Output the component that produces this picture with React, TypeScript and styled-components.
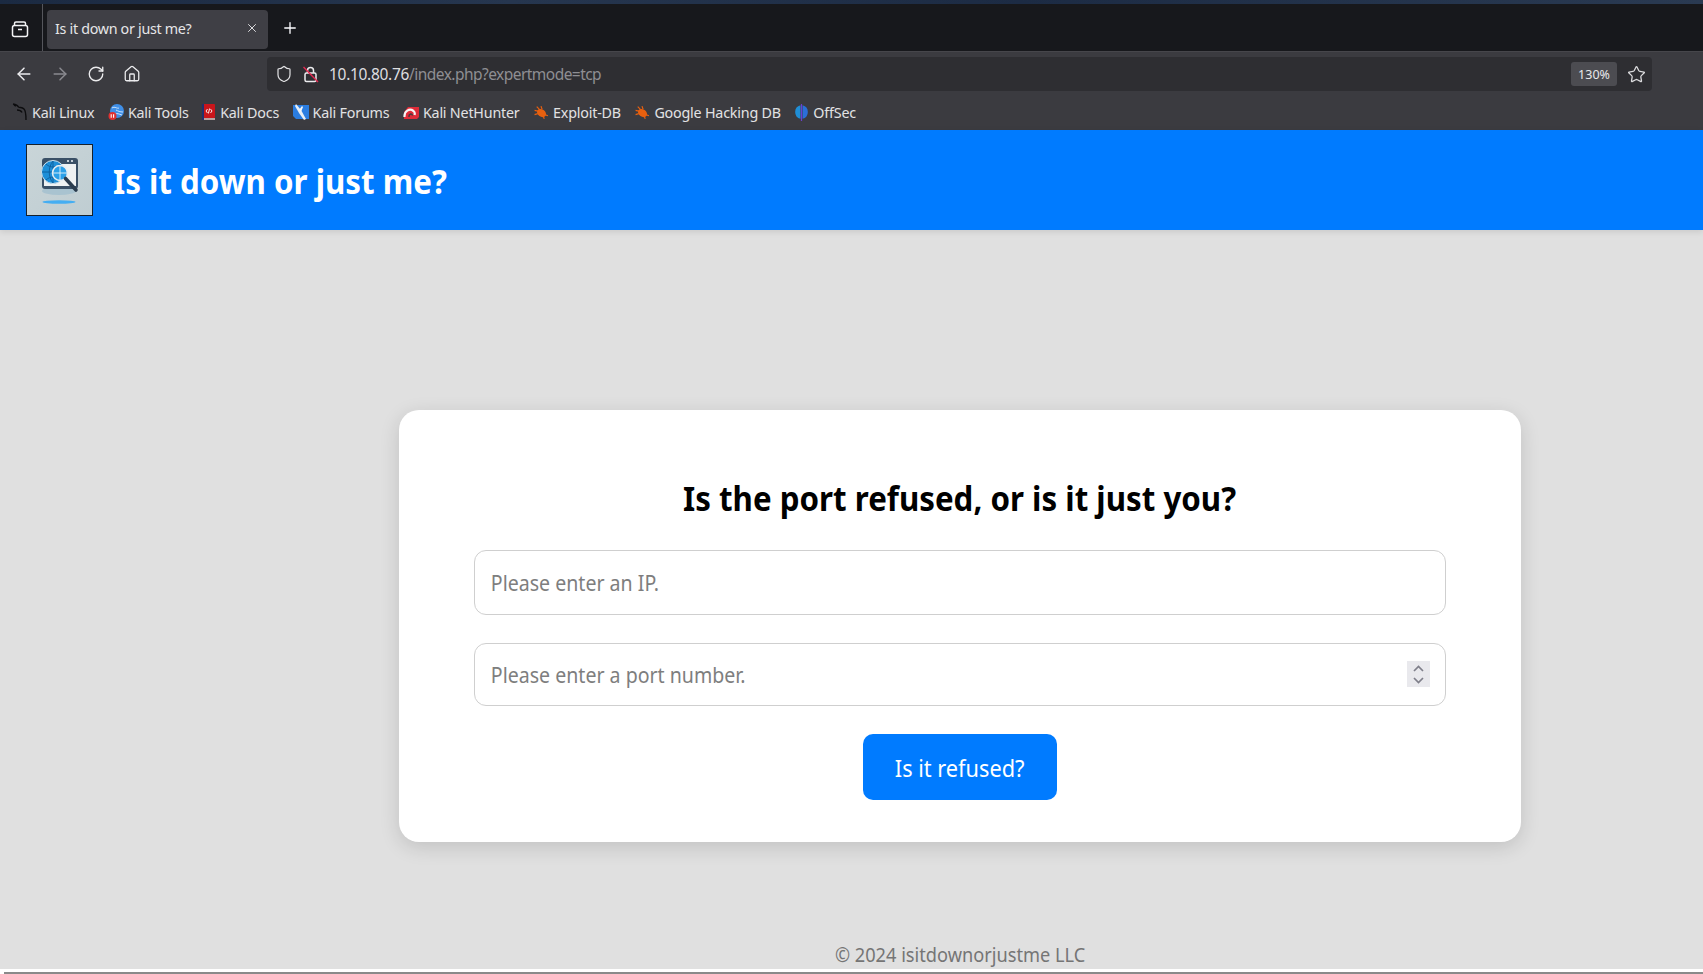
import React from "react";
import styled, { createGlobalStyle } from "styled-components";
import { ArrowLeft, ArrowRight, RotateCw, Home, Shield, Star, Plus, X } from "lucide-react";

const Global = createGlobalStyle`
  html, body { margin: 0; padding: 0; height: 974px; overflow: hidden; background: #e0e0e0; }
  * { box-sizing: border-box; }
  body { font-family: "Noto Sans", "Open Sans", sans-serif; }
`;

const Page = styled.div`
  display: flex;
  flex-direction: column;
  height: 974px;
`;
const Wallpaper = styled.div`
  height: 4px;
  background: linear-gradient(90deg, #1b2a42, #26364f 30%, #1c2b44 60%, #2a3a52);
`;
const TabBar = styled.div`
  height: 47px;
  background: #17181c;
  display: flex;
  align-items: center;
  color: #fbfbfe;
`;
const TabListButton = styled.div`
  width: 43px;
  height: 47px;
  display: flex;
  align-items: center;
  justify-content: center;
  border-right: 1px solid #55565c;
  padding-right: 3px;
  padding-top: 2px;
`;
const Tab = styled.div`
  margin-left: 4px;
  margin-top: 3px;
  width: 221px;
  height: 39px;
  background: #3f3f45;
  border-radius: 4px;
  display: flex;
  align-items: center;
  justify-content: space-between;
  padding: 0 9px 2px 8px;
  font-size: 14.3px;
  letter-spacing: -0.3px;
  color: #e6e6e8;
`;
const NewTab = styled.div`
  margin-left: 13px;
  margin-top: 1px;
  display: flex;
`;
const Toolbar = styled.div`
  height: 40px;
  background: #3b3b40;
  border-top: 1px solid #46464b;
  display: flex;
  align-items: flex-start;
  color: #e4e4e6;
`;
const NavGroup = styled.div`
  width: 267px;
  height: 44px;
  display: flex;
  align-items: center;
  gap: 14px;
  padding-left: 13px;
`;
const NavIcon = styled.div<{ $dim?: boolean }>`
  width: 22px;
  display: flex;
  justify-content: center;
  color: ${(p) => (p.$dim ? "#8b8b90" : "#ececee")};
`;
const UrlBar = styled.div`
  margin-top: 5px;
  width: 1385px;
  height: 34px;
  background: #2e2e32;
  border-radius: 4px;
  display: flex;
  align-items: center;
  padding: 0 0 0 3px;
  font-size: 15.5px;
`;
const UrlIcon = styled.div`
  width: 27px;
  display: flex;
  justify-content: center;
`;
const UrlText = styled.div`
  margin-left: 5px;
  flex: 1;
  color: #8e8e92;
  white-space: nowrap;
  letter-spacing: -0.54px;
`;
const UrlHost = styled.span`
  color: #dedee0;
  letter-spacing: -0.3px;
`;
const ZoomBadge = styled.div`
  width: 46px;
  height: 24px;
  border-radius: 3px;
  background: #4c4c51;
  color: #e8e8ea;
  font-size: 12.5px;
  display: flex;
  align-items: center;
  justify-content: center;
`;
const StarSlot = styled.div`
  width: 35px;
  display: flex;
  justify-content: flex-end;
  padding-right: 6px;
  color: #dcdcde;
`;
const Bookmarks = styled.div`
  height: 39px;
  background: #3b3b40;
  display: flex;
  align-items: center;
  padding: 3px 0 0 12px;
  gap: 13.5px;
  color: #e2e2e4;
  font-size: 14.3px;
  letter-spacing: -0.2px;
`;
const Bookmark = styled.div`
  display: flex;
  align-items: center;
  gap: 4px;
  white-space: nowrap;
`;
const SiteHeader = styled.header`
  height: 100px;
  background: #007bff;
  display: flex;
  align-items: center;
  padding-left: 26px;
  gap: 20px;
  box-shadow: 0 2px 6px rgba(0, 0, 0, 0.1);
  position: relative;
`;
const Logo = styled.svg`
  width: 67px;
  height: 72px;
  display: block;
`;
const SiteTitle = styled.h1`
  margin: 0;
  color: #fff;
  font-size: 34px;
  font-weight: 700;
  line-height: 1;
  padding-top: 2px;
  transform: scaleX(0.92);
  transform-origin: left center;
`;
const Main = styled.main`
  flex: 1;
  display: flex;
  flex-direction: column;
  align-items: center;
  padding: 180px 0 0 217px;
`;
const Card = styled.section`
  width: 1122px;
  height: 432px;
  background: #fff;
  border-radius: 20px;
  box-shadow: 0 5px 20px rgba(0, 0, 0, 0.14);
  padding: 66px 75px 0;
  display: flex;
  flex-direction: column;
  align-items: center;
`;
const Heading = styled.h2`
  margin: 0 0 27px;
  height: 47px;
  line-height: 45px;
  font-size: 34px;
  font-weight: 700;
  color: #000;
  transform: scaleX(0.92);
`;
const Field = styled.label<{ $h: number }>`
  width: 100%;
  height: ${(p) => p.$h}px;
  border: 1.5px solid #cfcfcf;
  border-radius: 12px;
  margin-bottom: 28px;
  display: flex;
  align-items: center;
  padding: 0 15px 0 14px;
`;
const Input = styled.input`
  flex: 1;
  border: 0;
  outline: 0;
  background: transparent;
  font: 400 21.5px "Noto Sans", sans-serif;
  color: #333;
  transform: scaleX(0.91);
  transform-origin: left center;
  &::placeholder { color: #7e7e7e; opacity: 1; }
`;
const Spinner = styled.span`
  width: 23px;
  height: 26px;
  margin-bottom: 1px;
  background: #e9e9ed;
  display: flex;
  align-items: center;
  justify-content: center;
`;
const Submit = styled.button`
  width: 194px;
  height: 66px;
  border: 0;
  border-radius: 10px;
  padding: 2px 0 0;
  background: #007bff;
  color: #fff;
  font: 400 23px "Noto Sans", sans-serif;
`;
const SubmitLabel = styled.span`
  display: inline-block;
  transform: scaleX(0.945);
`;
const Footer = styled.footer`
  margin-top: auto;
  height: 30px;
  line-height: 32px;
  font-size: 19.8px;
  color: #757575;
  transform: scaleX(0.92);
`;
const BottomEdge = styled.div`
  height: 5px;
  background: #fff;
  padding: 3px 0 0 4px;
`;
const EdgeLine = styled.div`
  height: 2px;
  background: #8a8a8a;
`;

const TabListIcon = () => (
  <svg width="18" height="18" viewBox="0 0 18 18" fill="none" stroke="#f4f4f6" strokeWidth="1.5">
    <rect x="1.5" y="5.5" width="15" height="11" rx="2" />
    <path d="M3.5 5.5V3.5a1.5 1.5 0 0 1 1.5-1.5h8a1.5 1.5 0 0 1 1.5 1.5v2" />
    <path d="M7 9.5h4" />
  </svg>
);
const LockOffIcon = () => (
  <svg width="18" height="18" viewBox="0 0 18 18" fill="none" strokeWidth="1.5">
    <rect x="3" y="8" width="11" height="8.5" rx="1.5" stroke="#ececee" />
    <path d="M5.5 8V5.5a3 3 0 0 1 6 0V8" stroke="#ececee" />
    <path d="M1.5 2L16 17" stroke="#e22850" strokeWidth="1.4" />
  </svg>
);
const SpinIcon = () => (
  <svg width="13" height="21" viewBox="0 0 13 21" fill="none" stroke="#7f7f8a" strokeWidth="1.7">
    <path d="M2 7l4.5-4.5L11 7" />
    <path d="M2 14l4.5 4.5L11 14" />
  </svg>
);

const KaliIcon = () => (
  <svg width="16" height="18" viewBox="0 0 16 18" fill="none" stroke="#0d0d0f" strokeWidth="1.4">
    <path d="M1 1c3 .5 5 2 5.5 3C8 5 10 4 12 6c1.5 1.5 2 5 2 11" />
    <path d="M5 7c2 0 4 .5 5 2.5" />
    <path d="M2 2l2 1" />
  </svg>
);
const ToolsIcon = () => (
  <svg width="16" height="18" viewBox="0 0 16 18">
    <circle cx="9" cy="8" r="7" fill="#3f8fe8" />
    <path d="M4 5c3-2 5 1 7 0M8 7c2 1 4 2 7 2M7 11c2-1 4 0 7 1" stroke="#cfe4fa" strokeWidth="1" fill="none" />
    <circle cx="4.5" cy="13" r="4" fill="#e03030" />
    <path d="M3.2 11.2v3.6M5.6 11.2v3.6" stroke="#fff" strokeWidth="1.1" />
  </svg>
);
const DocsIcon = () => (
  <svg width="14" height="18" viewBox="0 0 14 18">
    <rect x="1" y="1" width="12" height="14" rx="1" fill="#c9151b" />
    <rect x="0" y="1" width="2" height="16" fill="#22306e" />
    <rect x="2" y="15" width="11" height="2" fill="#b9a0a0" />
    <path d="M5.5 6L4 8l1.5 2M8.5 6L10 8l-1.5 2M7.6 5.5L6.4 10.5" stroke="#fff" strokeWidth=".9" fill="none" />
  </svg>
);
const ForumsIcon = () => (
  <svg width="16" height="16" viewBox="0 0 16 16">
    <path d="M0 1h16v14H3L0 12z" fill="#2b7de0" />
    <path d="M3 0l5 6 5 9-2 1-5-7-4-7z" fill="#e8eef4" />
    <path d="M6 6l3-4 1 1-2 5z" fill="#f4f6f8" />
  </svg>
);
const HunterIcon = () => (
  <svg width="16" height="16" viewBox="0 0 16 16">
    <path d="M5 3h11v10l-2 2H1V8z" fill="#de2b38" />
    <path d="M1.5 13c-.5-6 5-9 9-6 1.2 1 1.5 2.5 1 4" stroke="#f4f4f4" strokeWidth="2.2" fill="none" />
    <path d="M6 13c-.5-3 3-4 3.5-1.5" stroke="#3b3b40" strokeWidth="1.4" fill="none" />
  </svg>
);
const BugIcon = () => (
  <svg width="16" height="15" viewBox="0 0 14 14">
    <ellipse cx="7.5" cy="7.5" rx="4.6" ry="3.4" transform="rotate(35 7.5 7.5)" fill="#e8600f" />
    <path d="M1 5l4 1M3 1.5l3 3M7 1l1 3M1 9l3-1M13.5 10l-3-1M10 13l-1-3" stroke="#e8600f" strokeWidth="1.1" />
  </svg>
);
const OffSecIcon = () => (
  <svg width="15" height="18" viewBox="0 0 15 18">
    <path d="M6.5 2.2A7 7 0 0 0 6.5 15.8z" fill="#1f8ed6" />
    <path d="M8.5 2.2A7 7 0 0 1 8.5 15.8z" fill="#2a6fd8" />
    <rect x="6.9" y="1" width="1.2" height="17" fill="#6a3fd0" />
  </svg>
);

const bookmarks: [React.ReactNode, string][] = [
  [<KaliIcon />, "Kali Linux"],
  [<ToolsIcon />, "Kali Tools"],
  [<DocsIcon />, "Kali Docs"],
  [<ForumsIcon />, "Kali Forums"],
  [<HunterIcon />, "Kali NetHunter"],
  [<BugIcon />, "Exploit-DB"],
  [<BugIcon />, "Google Hacking DB"],
  [<OffSecIcon />, "OffSec"],
];

const SiteLogo = () => (
  <Logo viewBox="0 0 67 72">
    <defs>
      <linearGradient id="lg" x1="0" y1="0" x2="1" y2="1">
        <stop offset="0" stopColor="#c9d5d8" />
        <stop offset="1" stopColor="#bfcdd2" />
      </linearGradient>
    </defs>
    <rect x=".5" y=".5" width="66" height="71" fill="url(#lg)" stroke="#15202b" />
    <ellipse cx="33" cy="47" rx="17" ry="4" fill="#a9c3d0" />
    <rect x="16" y="14" width="36" height="31" rx="3" fill="#3a5066" />
    <rect x="18" y="20" width="32" height="22" fill="#eef1f2" />
    <circle cx="42" cy="17" r="1.1" fill="#e6edf2" />
    <circle cx="46" cy="17" r="1.1" fill="#e6edf2" />
    <circle cx="27" cy="28" r="11.5" fill="#1e8fd8" stroke="#cfe0ea" strokeWidth="1" />
    <path d="M16 28h22M27 17v22M20 20c4 4 10 4 14 0M20 36c4-4 10-4 14 0M27 17c-5 6-5 16 0 22" stroke="#0f5f9c" strokeWidth=".9" fill="none" />
    <circle cx="34" cy="29" r="7.5" fill="#2ba0e8" stroke="#e6edf2" strokeWidth="1.6" />
    <path d="M34 22v14M27 29h14" stroke="#e4f3fb" strokeWidth=".9" />
    <path d="M39.5 34.5L50 46" stroke="#2a3c4e" strokeWidth="3.6" strokeLinecap="round" />
    <ellipse cx="33" cy="58" rx="16.5" ry="1.7" fill="#45aef2" />
  </Logo>
);

export default function App() {
  return (
    <Page>
      <Global />
      <Wallpaper />
      <TabBar>
        <TabListButton>
          <TabListIcon />
        </TabListButton>
        <Tab>
          <span>Is it down or just me?</span>
          <X size={14} strokeWidth={1.6} />
        </Tab>
        <NewTab>
          <Plus size={18} strokeWidth={1.8} />
        </NewTab>
      </TabBar>
      <Toolbar>
        <NavGroup>
          <NavIcon><ArrowLeft size={20} strokeWidth={1.8} /></NavIcon>
          <NavIcon $dim><ArrowRight size={20} strokeWidth={1.8} /></NavIcon>
          <NavIcon><RotateCw size={18} strokeWidth={1.8} /></NavIcon>
          <NavIcon><Home size={18} strokeWidth={1.7} /></NavIcon>
        </NavGroup>
        <UrlBar>
          <UrlIcon><Shield size={18} strokeWidth={1.6} /></UrlIcon>
          <UrlIcon><LockOffIcon /></UrlIcon>
          <UrlText>
            <UrlHost>10.10.80.76</UrlHost>/index.php?expertmode=tcp
          </UrlText>
          <ZoomBadge>130%</ZoomBadge>
          <StarSlot><Star size={19} strokeWidth={1.6} /></StarSlot>
        </UrlBar>
      </Toolbar>
      <Bookmarks>
        {bookmarks.map(([icon, label]) => (
          <Bookmark key={label}>
            {icon}
            <span>{label}</span>
          </Bookmark>
        ))}
      </Bookmarks>
      <SiteHeader>
        <SiteLogo />
        <SiteTitle>Is it down or just me?</SiteTitle>
      </SiteHeader>
      <Main>
        <Card>
          <Heading>Is the port refused, or is it just you?</Heading>
          <Field $h={65}>
            <Input placeholder="Please enter an IP." />
          </Field>
          <Field $h={63}>
            <Input placeholder="Please enter a port number." />
            <Spinner><SpinIcon /></Spinner>
          </Field>
          <Submit type="button"><SubmitLabel>Is it refused?</SubmitLabel></Submit>
        </Card>
        <Footer>© 2024 isitdownorjustme LLC</Footer>
      </Main>
      <BottomEdge>
        <EdgeLine />
      </BottomEdge>
    </Page>
  );
}
